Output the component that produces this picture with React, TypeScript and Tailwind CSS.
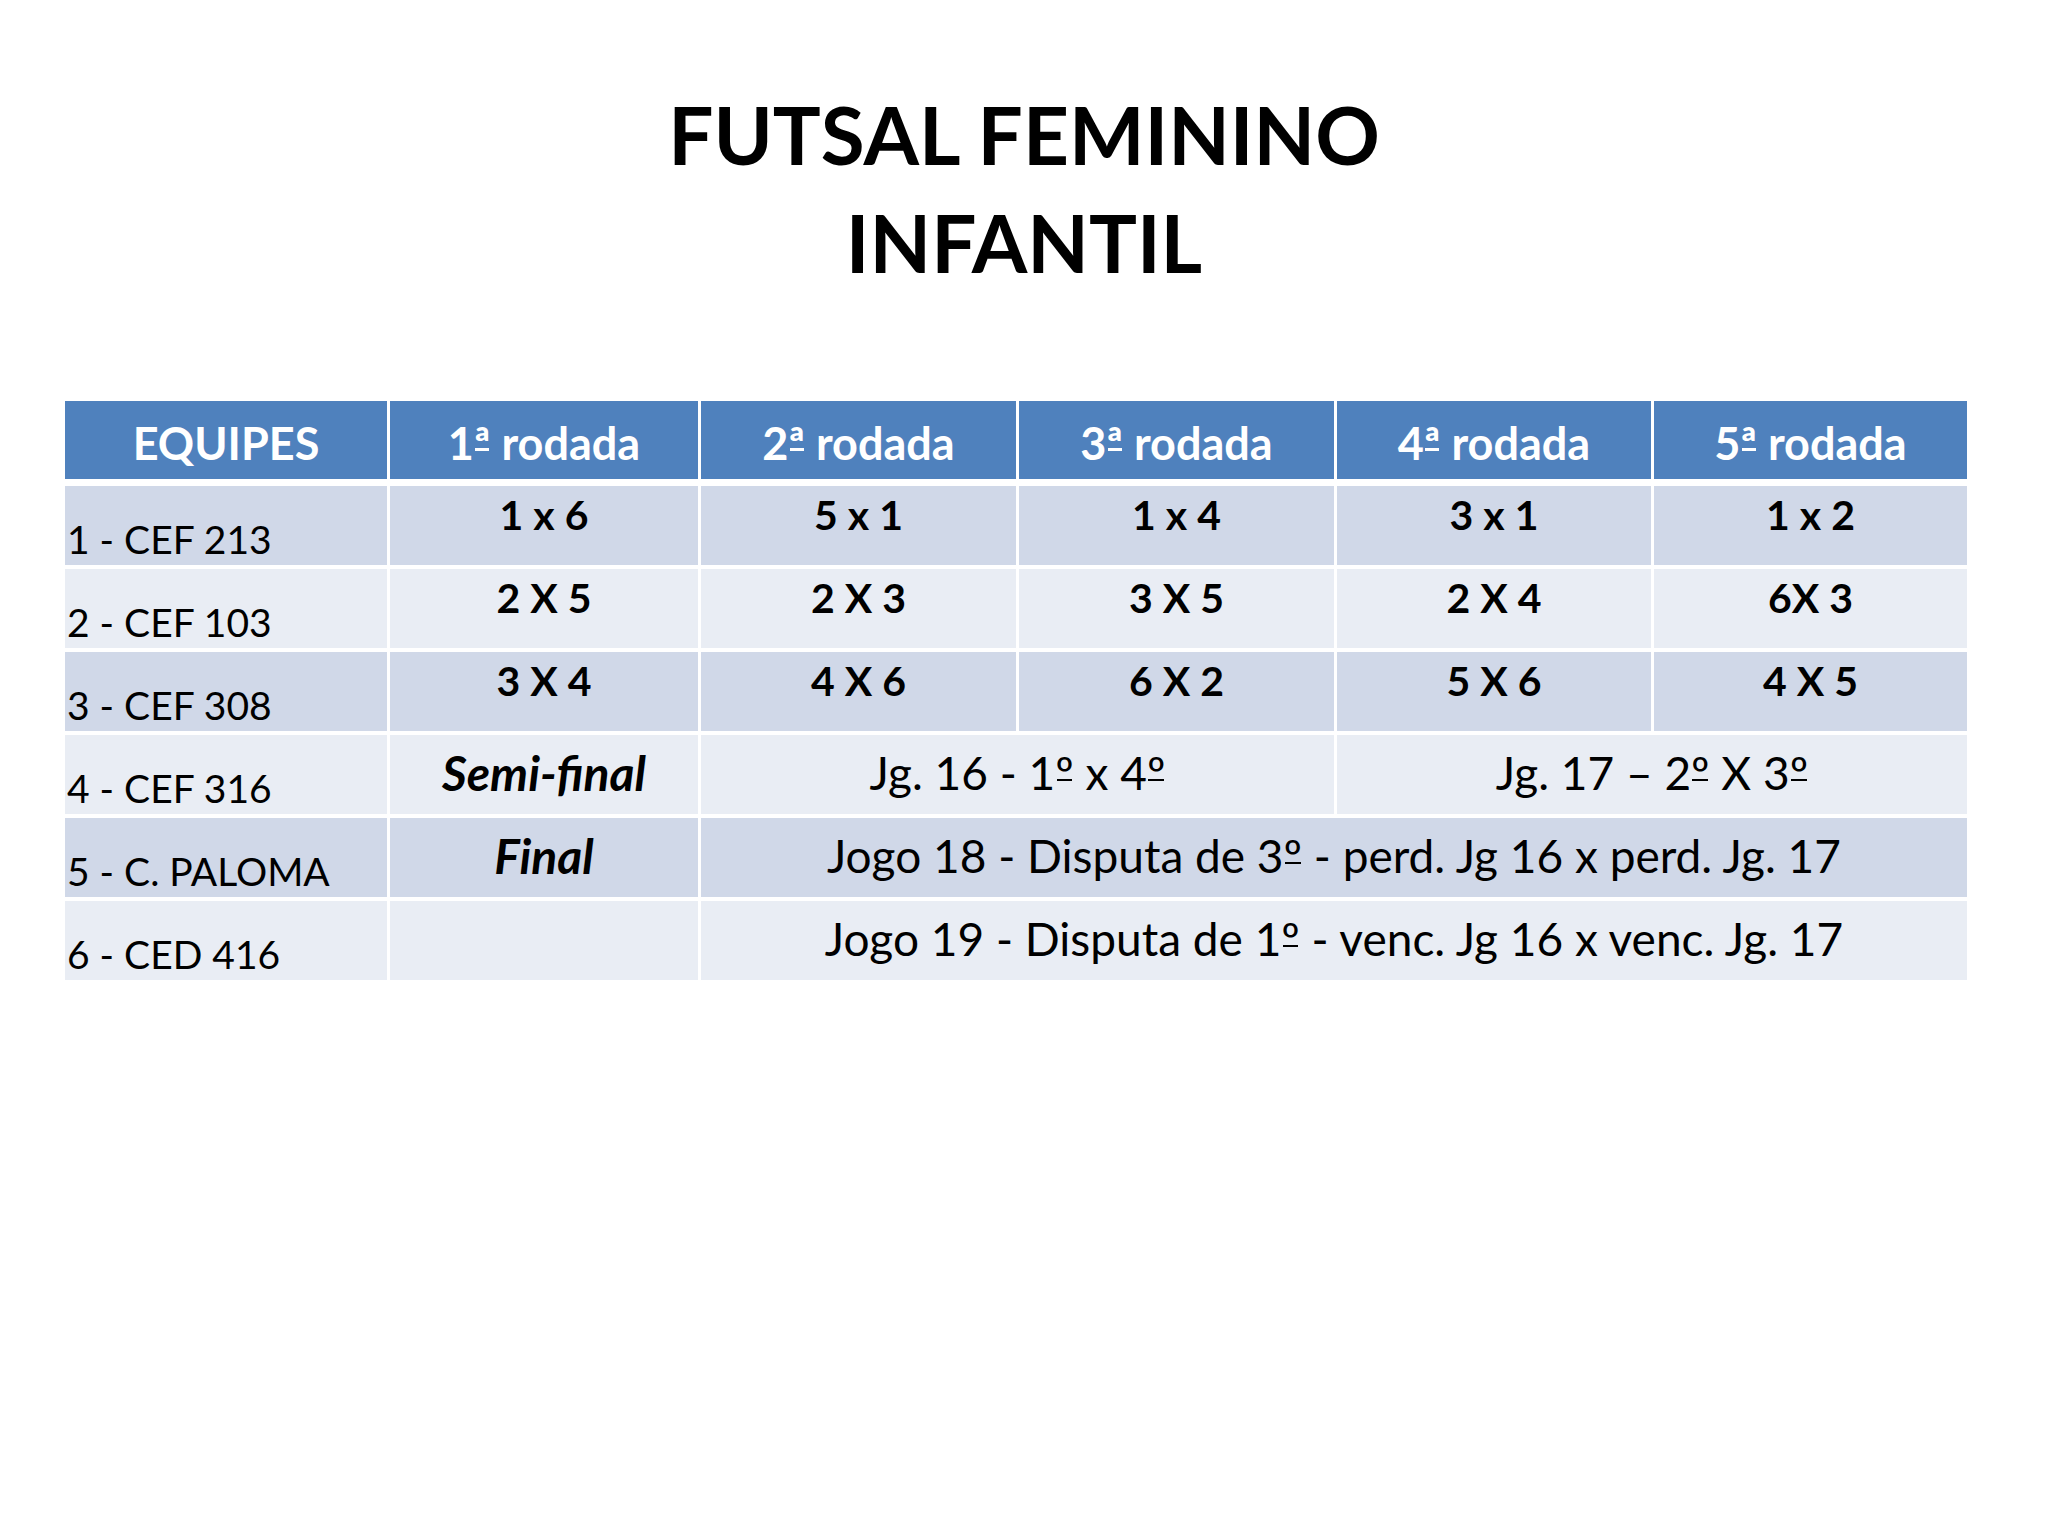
import React from 'react';

const FONT = "font-['Lato','Liberation_Sans',sans-serif]";

const HEADERS = ['EQUIPES', '1ª rodada', '2ª rodada', '3ª rodada', '4ª rodada', '5ª rodada'];

const ROUNDS: { team: string; games: string[] }[] = [
  { team: '1 - CEF 213', games: ['1 x 6', '5 x 1', '1 x 4', '3 x 1', '1 x 2'] },
  { team: '2 - CEF 103', games: ['2 X 5', '2 X 3', '3 X 5', '2 X 4', '6X 3'] },
  { team: '3 - CEF 308', games: ['3 X 4', '4 X 6', '6 X 2', '5 X 6', '4 X 5'] },
];

const COLS = 'grid grid-cols-[322px_308px_315px_315px_314px_313px] gap-x-[3px]';

function rowBg(i: number) {
  return i % 2 === 0 ? 'bg-[#d0d8e8]' : 'bg-[#e9edf4]';
}

// ordinal ª / º drawn with the small bar underneath, as in the slide's font
function Ord({ text }: { text: string }) {
  const parts = text.split(/([ªº])/);
  return (
    <>
      {parts.map((p, i) =>
        p === 'ª' || p === 'º' ? (
          <span key={i} className="relative inline-block leading-none">
            {p}
            <span className="absolute left-[0.03em] right-[0.03em] top-[0.62em] h-[0.055em] bg-current" />
          </span>
        ) : (
          <React.Fragment key={i}>{p}</React.Fragment>
        ),
      )}
    </>
  );
}

function TeamCell({ name, bg }: { name: string; bg: string }) {
  return (
    <div className={`${bg} h-[79px] flex items-end pl-[2px] pb-[6px]`}>
      <span className="text-[39px] leading-none text-black whitespace-nowrap">{name}</span>
    </div>
  );
}

export default function App() {
  return (
    <div className={`${FONT} w-[2048px] h-[1536px] bg-white text-black`}>
      {/* Title */}
      <div className="flex flex-col items-center pt-[80px]">
        <h1 className="text-[80px] font-bold leading-[108px] text-center">FUTSAL FEMININO</h1>
        <h1 className="text-[80px] font-bold leading-[108px] text-center">INFANTIL</h1>
      </div>

      {/* Table */}
      <div className="ml-[65px] mt-[105px] w-[1902px]">
        <div className={COLS}>
          {HEADERS.map(h => (
            <div key={h} className="bg-[#4f81bd] h-[78px] flex items-center justify-center pt-[6px]">
              <span className="text-[45px] font-bold leading-none text-white whitespace-nowrap">
                <Ord text={h} />
              </span>
            </div>
          ))}
        </div>

        <div className={`${COLS} gap-y-[4px] mt-[7px]`}>
          {ROUNDS.map((r, i) => (
            <React.Fragment key={r.team}>
              <TeamCell name={r.team} bg={rowBg(i)} />
              {r.games.map((g, j) => (
                <div key={j} className={`${rowBg(i)} h-[79px] flex justify-center pt-[8px]`}>
                  <span className="text-[41px] font-bold leading-none">{g}</span>
                </div>
              ))}
            </React.Fragment>
          ))}

          {/* Semi-final */}
          <TeamCell name="4 - CEF 316" bg={rowBg(3)} />
          <div className={`${rowBg(3)} h-[79px] flex justify-center pt-[14px]`}>
            <span className="text-[48px] font-bold italic leading-none">Semi-final</span>
          </div>
          <div className={`${rowBg(3)} col-span-2 h-[79px] flex justify-center pt-[15px]`}>
            <span className="text-[46px] leading-none whitespace-nowrap"><Ord text="Jg. 16 - 1º x 4º" /></span>
          </div>
          <div className={`${rowBg(3)} col-span-2 h-[79px] flex justify-center pt-[15px]`}>
            <span className="text-[46px] leading-none whitespace-nowrap"><Ord text="Jg. 17 – 2º X 3º" /></span>
          </div>

          {/* Final */}
          <TeamCell name="5 - C. PALOMA" bg={rowBg(4)} />
          <div className={`${rowBg(4)} h-[79px] flex justify-center pt-[14px]`}>
            <span className="text-[48px] font-bold italic leading-none">Final</span>
          </div>
          <div className={`${rowBg(4)} col-span-4 h-[79px] flex justify-center pt-[15px]`}>
            <span className="text-[46px] leading-none whitespace-nowrap">
              <Ord text="Jogo 18 - Disputa de 3º - perd. Jg 16 x perd. Jg. 17" />
            </span>
          </div>

          <TeamCell name="6 - CED 416" bg={rowBg(5)} />
          <div className={`${rowBg(5)} h-[79px]`} />
          <div className={`${rowBg(5)} col-span-4 h-[79px] flex justify-center pt-[15px]`}>
            <span className="text-[46px] leading-none whitespace-nowrap">
              <Ord text="Jogo 19 - Disputa de 1º - venc. Jg 16 x venc. Jg. 17" />
            </span>
          </div>
        </div>
      </div>
    </div>
  );
}
